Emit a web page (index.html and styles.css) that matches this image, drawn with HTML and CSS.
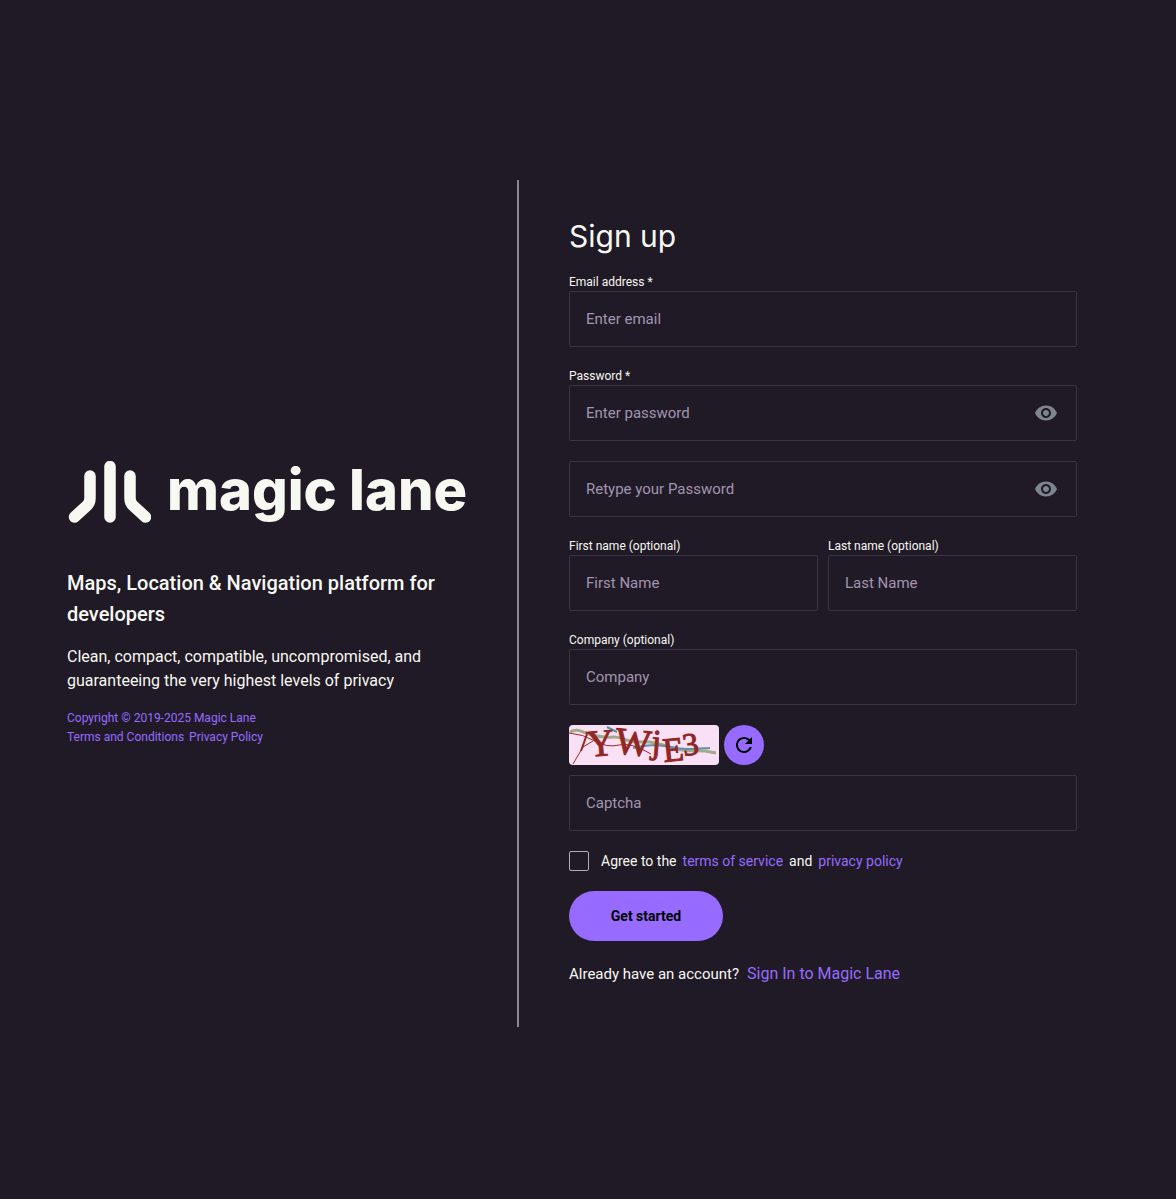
FILE: index.html
```html
<!DOCTYPE html>
<html lang="en">
<head>
<meta charset="utf-8">
<meta name="viewport" content="width=device-width, initial-scale=1">
<title>Sign up - Magic Lane</title>
<link rel="stylesheet" href="styles.css">
</head>
<body>
<main class="page">
  <section class="intro">
    <div class="logo">
      <svg class="logo-mark" viewBox="0 0 84 64" width="84" height="64" aria-hidden="true">
        <g fill="none" stroke="#f7f8f1" stroke-width="11.5" stroke-linecap="round" stroke-linejoin="round">
          <path d="M23 15V37Q23 42 19.500 45L7.500 56"/>
          <path d="M43 5.500V56"/>
          <path d="M63 15V37Q63 42 66.500 45L78.500 56"/>
        </g>
      </svg>
      <span class="logo-text">magic lane</span>
    </div>
    <h2 class="tagline">Maps, Location &amp; Navigation platform for developers</h2>
    <p class="summary">Clean, compact, compatible, uncompromised, and guaranteeing the very highest levels of privacy</p>
    <div class="legal">
      <a href="#">Copyright © 2019-2025 Magic Lane</a>
      <div class="legal-row"><a href="#">Terms and Conditions</a><a href="#">Privacy Policy</a></div>
    </div>
  </section>

  <form class="signup">
    <h1 class="title">Sign up</h1>
    <div class="field">
      <label class="label" for="email">Email address *</label>
      <input class="input" id="email" type="email" placeholder="Enter email">
    </div>
    <div class="field">
      <label class="label" for="password">Password *</label>
      <div class="secret">
        <input class="input" id="password" type="password" placeholder="Enter password">
        <button class="reveal" type="button" aria-label="Show password">
          <svg viewBox="0 0 24 24" width="24" height="24"><path fill="currentColor" d="M12 4.500C7 4.500 2.730 7.610 1 12c1.730 4.390 6 7.500 11 7.500s9.270-3.110 11-7.500c-1.730-4.390-6-7.500-11-7.500zM12 17c-2.760 0-5-2.240-5-5s2.240-5 5-5 5 2.240 5 5-2.240 5-5 5zm0-8c-1.660 0-3 1.340-3 3s1.340 3 3 3 3-1.340 3-3-1.340-3-3-3z"/></svg>
        </button>
      </div>
    </div>
    <div class="secret">
      <input class="input" type="password" placeholder="Retype your Password" aria-label="Retype your Password">
      <button class="reveal" type="button" aria-label="Show retyped password">
        <svg viewBox="0 0 24 24" width="24" height="24"><path fill="currentColor" d="M12 4.500C7 4.500 2.730 7.610 1 12c1.730 4.390 6 7.500 11 7.500s9.270-3.110 11-7.500c-1.730-4.390-6-7.500-11-7.500zM12 17c-2.760 0-5-2.240-5-5s2.240-5 5-5 5 2.240 5 5-2.240 5-5 5zm0-8c-1.660 0-3 1.340-3 3s1.340 3 3 3 3-1.340 3-3-1.340-3-3-3z"/></svg>
      </button>
    </div>
    <div class="names">
      <div class="field">
        <label class="label" for="first">First name (optional)</label>
        <input class="input" id="first" type="text" placeholder="First Name">
      </div>
      <div class="field">
        <label class="label" for="last">Last name (optional)</label>
        <input class="input" id="last" type="text" placeholder="Last Name">
      </div>
    </div>
    <div class="field">
      <label class="label" for="company">Company (optional)</label>
      <input class="input" id="company" type="text" placeholder="Company">
    </div>
    <div class="captcha">
      <div class="captcha-row">
        <svg class="captcha-image" viewBox="0 0 150 40" width="150" height="40" role="img" aria-label="Captcha code">
          <rect width="150" height="40" rx="4" fill="#fae0f5"/>
          <g fill="none">
            <path d="M1 7C8 3 13 7 20 9S34 13 44 12S58 18 70 17S92 19 104 23S126 25 136 26L147 28" stroke="#a3a98b" stroke-width="3"/>
            <path d="M38 2L48 7M64 23C78 20 88 19 102 22S124 24 141 23" stroke="#5d91aa" stroke-width="2"/>
            <path d="M0 8Q14 9 26 16T50 20T82 29M4 39L14 22L24 16" stroke="#9b2b2b"/>
            <path d="M12 26L18 9" stroke="#912724" stroke-width="2"/>
          </g>
          <g class="captcha-glyphs">
            <text x="19" y="32" font-size="38" transform="rotate(-5 19 32)">Y</text>
            <text x="45" y="28" font-size="38" transform="rotate(6 45 28)">W</text>
            <text x="82" y="28" font-size="34" transform="rotate(4 82 28)">j</text>
            <text x="95" y="37" font-size="34" transform="rotate(-6 95 37)">E</text>
            <text x="115" y="31" font-size="32" transform="rotate(-8 115 31)">3</text>
          </g>
        </svg>
        <button class="refresh" type="button" aria-label="New captcha">
          <svg viewBox="0 0 24 24" width="24" height="24"><path fill="currentColor" d="M17.650 6.350C16.200 4.900 14.210 4 12 4c-4.420 0-7.990 3.580-7.990 8s3.570 8 7.990 8c3.730 0 6.840-2.550 7.730-6h-2.080c-.820 2.330-3.040 4-5.650 4-3.310 0-6-2.690-6-6s2.690-6 6-6c1.660 0 3.140.690 4.220 1.780L13 11h7V4l-2.350 2.350z"/></svg>
        </button>
      </div>
      <input class="input" type="text" placeholder="Captcha" aria-label="Captcha">
    </div>
    <div class="agree">
      <input class="check" id="agree" type="checkbox">
      <div class="agree-text"><label for="agree">Agree to the</label><a href="#">terms of service</a><span>and</span><a href="#">privacy policy</a></div>
    </div>
    <button class="submit" type="submit">Get started</button>
    <p class="signin"><span>Already have an account?</span><a class="signin-link" href="#">Sign In to Magic Lane</a></p>
  </form>
</main>
</body>
</html>
```
FILE: styles.css
```css
* { box-sizing: border-box; }

body {
  margin: 0;
  background: #201a26;
  color: #f7f8f1;
  font-family: Roboto, "Noto Sans", sans-serif;
  font-size: 15px;
}

a { color: #976bff; text-decoration: none; }
h1, h2, p { margin: 0; }
svg { display: block; }

.page {
  min-height: 100vh;
  padding: 8px 99px 0 67px;
  display: grid;
  grid-template-columns: minmax(0, 45fr) minmax(0, 56fr);
  align-content: center;
}

.intro {
  display: flex;
  flex-direction: column;
  justify-content: center;
  padding-right: 49px;
}

.logo { display: flex; align-items: flex-start; gap: 16px; height: 64px; margin-bottom: 43px; }
.logo-mark { flex: none; }
.logo-text {
  font-family: Inter, sans-serif;
  font-size: 56px;
  font-weight: 800;
  line-height: 58px;
  white-space: nowrap;
}

.tagline { font-size: 20px; font-weight: 500; line-height: 31px; margin-bottom: 15px; }
.summary { font-size: 16px; line-height: 24px; margin-bottom: 16px; }
.legal { font-size: 12px; line-height: 19px; }
.legal-row { display: flex; gap: 5px; }

.signup {
  display: flex;
  flex-direction: column;
  gap: 20px;
  padding: 40px 0 40px 50px;
  border-left: 2px solid #8b888c;
}

.title { font-family: Inter, sans-serif; font-size: 30px; font-weight: 400; line-height: 33px; }
.label { display: block; font-size: 12px; line-height: 18px; }

.input {
  display: block;
  width: 100%;
  height: 56px;
  padding: 0 16px;
  border: 1px solid #3a3342;
  border-radius: 2px;
  background: transparent;
  color: #f7f8f1;
  font: inherit;
}
.input::placeholder { color: #a295b0; opacity: 1; }

.secret { position: relative; }
.secret .input { padding-right: 56px; }
.reveal {
  position: absolute;
  top: 16px;
  right: 19px;
  padding: 0;
  border: 0;
  background: none;
  color: #7e858f;
}

.names { display: grid; grid-template-columns: 1fr 1fr; gap: 10px; }

.captcha { display: grid; gap: 10px; }
.captcha-row { display: flex; gap: 5px; }
.captcha-image { overflow: visible; }
.captcha-glyphs {
  fill: #912724;
  stroke: #912724;
  stroke-width: 1px;
  font-family: "Liberation Serif", serif;
}
.refresh {
  display: grid;
  place-items: center;
  width: 40px;
  height: 40px;
  padding: 0;
  border: 0;
  border-radius: 50%;
  background: #976bff;
  color: #000;
}

.agree { display: flex; align-items: center; gap: 12px; height: 20px; font-size: 14px; }
.agree-text { display: flex; gap: 6px; }
.check {
  appearance: none;
  width: 20px;
  height: 20px;
  margin: 0;
  border: 1px solid #b5a9c2;
  border-radius: 2px;
}
.check:checked { background: #976bff; }

.submit {
  align-self: flex-start;
  min-width: 154px;
  height: 50px;
  padding: 0 40px;
  border: 0;
  border-radius: 25px;
  background: #976bff;
  color: #000;
  font: 700 14px Roboto, sans-serif;
}

.signin { display: flex; align-items: center; gap: 8px; line-height: 26px; }
.signin-link { font-size: 16px; }
```
